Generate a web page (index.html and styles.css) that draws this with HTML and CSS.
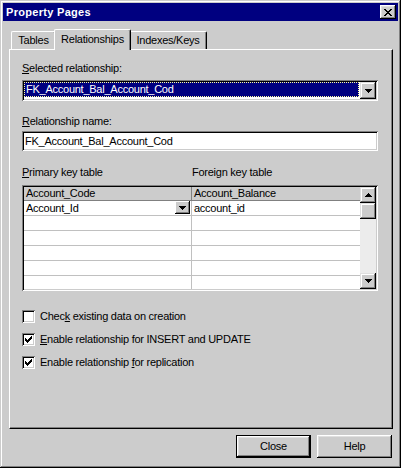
FILE: index.html
```html
<!DOCTYPE html>
<html>
<head>
<meta charset="utf-8">
<link rel="stylesheet" href="styles.css">
</head>
<body>
<div class="window">
  <div class="titlebar">
    <span class="title">Property Pages</span>
    <span class="close-btn"><svg width="8" height="7" viewBox="0 0 8 7"><path d="M0 0h2v1h1v1h2v-1h1v-1h2v1h-1v1h-1v1h-1v1h1v1h1v1h1v1h-2v-1h-1v-1h-2v1h-1v1h-2v-1h1v-1h1v-1h1v-1h-1v-1h-1v-1h-1z" fill="#000"/></svg></span>
  </div>
  <div class="tabs">
    <div class="tab tab-tables">Tables</div>
    <div class="tab tab-rel active">Relationships</div>
    <div class="tab tab-idx">Indexes/Keys</div>
  </div>
  <div class="panel">
    <div class="field-label first"><u>S</u>elected relationship:</div>
    <div class="combo">
      <div class="combo-value">FK_Account_Bal_Account_Cod</div>
      <div class="combo-btn"><svg width="7" height="4" viewBox="0 0 7 4"><path d="M0 0h7v1h-1v1h-1v1h-1v1h-1v-1h-1v-1h-1v-1h-1z" fill="#000"/></svg></div>
    </div>
    <div class="field-label second"><u>R</u>elationship name:</div>
    <div class="textbox">FK_Account_Bal_Account_Cod</div>
    <div class="grid-labels">
      <span class="gl-primary"><u>P</u>rimary key table</span>
      <span>Foreign key table</span>
    </div>
    <div class="grid">
      <div class="grid-table">
        <div class="grid-row grid-head">
          <div class="cell cell1">Account_Code</div>
          <div class="cell cell2">Account_Balance</div>
        </div>
        <div class="grid-row">
          <div class="cell cell1 cell-drop">
            <span>Account_Id</span>
            <span class="mini-btn"><svg width="7" height="4" viewBox="0 0 7 4"><path d="M0 0h7v1h-1v1h-1v1h-1v1h-1v-1h-1v-1h-1v-1h-1z" fill="#000"/></svg></span>
          </div>
          <div class="cell cell2">account_id</div>
        </div>
        <div class="grid-row"><div class="cell cell1"></div><div class="cell cell2"></div></div>
        <div class="grid-row"><div class="cell cell1"></div><div class="cell cell2"></div></div>
        <div class="grid-row"><div class="cell cell1"></div><div class="cell cell2"></div></div>
        <div class="grid-row"><div class="cell cell1"></div><div class="cell cell2"></div></div>
        <div class="grid-row"><div class="cell cell1"></div><div class="cell cell2"></div></div>
      </div>
      <div class="scrollbar">
        <div class="sb-btn"><svg width="7" height="4" viewBox="0 0 7 4"><path d="M3 0h1v1h1v1h1v1h1v1h-7v-1h1v-1h1v-1h1z" fill="#000"/></svg></div>
        <div class="sb-thumb"></div>
        <div class="sb-track"></div>
        <div class="sb-btn"><svg width="7" height="4" viewBox="0 0 7 4"><path d="M0 0h7v1h-1v1h-1v1h-1v1h-1v-1h-1v-1h-1v-1h-1z" fill="#000"/></svg></div>
      </div>
    </div>
    <div class="checks">
      <div class="check-row"><span class="box"></span><span>Chec<u>k</u> existing data on creation</span></div>
      <div class="check-row"><span class="box"><svg width="7" height="7" viewBox="0 0 7 7"><path d="M0 2h1v1h1v1h1v-1h1v-1h1v-1h1v-1h1v3h-1v1h-1v1h-1v1h-1v1h-1v-1h-1v-1h-1v-1h-1z" fill="#000"/></svg></span><span><u>E</u>nable relationship for INSERT and UPDATE</span></div>
      <div class="check-row"><span class="box"><svg width="7" height="7" viewBox="0 0 7 7"><path d="M0 2h1v1h1v1h1v-1h1v-1h1v-1h1v-1h1v3h-1v1h-1v1h-1v1h-1v1h-1v-1h-1v-1h-1v-1h-1z" fill="#000"/></svg></span><span>Enable relationship <u>f</u>or replication</span></div>
    </div>
  </div>
  <div class="buttons">
    <div class="btn default"><span>Close</span></div>
    <div class="btn">Help</div>
  </div>
</div>
</body>
</html>
```
FILE: styles.css
```css
* { box-sizing: border-box; }
html, body { margin: 0; padding: 0; }
body {
  width: 401px;
  height: 468px;
  overflow: hidden;
  background: #cccccc;
  font-family: "Liberation Sans", Arial, sans-serif;
  font-size: 11px;
  line-height: 13px;
  letter-spacing: -0.25px;
  color: #000;
}
svg { display: block; shape-rendering: crispEdges; }
u { text-decoration: underline; text-underline-offset: 1px; }

.window {
  width: 401px;
  height: 468px;
  padding: 3px;
  background: #cccccc;
  display: flex;
  flex-direction: column;
  box-shadow: inset -1px -1px #000, inset 1px 1px #cccccc, inset -2px -2px #808080, inset 2px 2px #fff;
}

.titlebar {
  height: 18px;
  flex-shrink: 0;
  background: #000080;
  color: #fff;
  display: flex;
  align-items: center;
  justify-content: space-between;
  padding: 0 2px 0 3px;
}
.title { font-weight: bold; font-size: 11px; letter-spacing: 0.3px; }
.close-btn {
  width: 16px;
  height: 14px;
  background: #cccccc;
  display: flex;
  align-items: center;
  justify-content: center;
  box-shadow: inset -1px -1px #000, inset 1px 1px #fff, inset -2px -2px #808080, inset 2px 2px #dfdfdf;
}

.tabs {
  display: flex;
  align-items: flex-end;
  height: 20px;
  margin: 8px 0 0 8px;
  flex-shrink: 0;
}
.tab {
  height: 18px;
  text-align: center;
  line-height: 16px;
  background: #cccccc;
  border-top: 1px solid #fff;
  border-left: 1px solid #fff;
  border-right: 1px solid #000;
  border-radius: 2px 2px 0 0;
  box-shadow: inset -1px 0 #808080;
}
.tab-tables { width: 45px; }
.tab-rel { width: 77px; }
.tab-idx { width: 78px; }
.tab.active {
  height: 21px;
  line-height: 18px;
  margin: 0 -2px -1px -2px;
  position: relative;
  z-index: 1;
}

.panel {
  margin-left: 6px;
  width: 384px;
  height: 380px;
  flex-shrink: 0;
  border-top: 1px solid #fff;
  border-left: 1px solid #fff;
  border-right: 1px solid #000;
  border-bottom: 1px solid #000;
  box-shadow: inset -1px -1px #808080;
  padding-left: 12px;
  display: flex;
  flex-direction: column;
}

.field-label { height: 13px; }
.field-label.first { margin-top: 12px; }
.field-label.second { margin-top: 14px; }

.combo {
  margin-top: 5px;
  width: 356px;
  height: 21px;
  padding: 2px;
  background: #fff;
  display: flex;
  box-shadow: inset 1px 1px #808080, inset -1px -1px #fff, inset 2px 2px #000, inset -2px -2px #cccccc;
}
.combo-value {
  flex: 1;
  margin: 0 1px 2px 0;
  background: #000080;
  color: #fff;
  border: 1px dotted #ffffa0;
  padding-left: 1px;
  line-height: 13px;
}
.combo-btn {
  width: 16px;
  height: 17px;
  background: #cccccc;
  display: flex;
  align-items: center;
  justify-content: center;
  box-shadow: inset -1px -1px #000, inset 1px 1px #dfdfdf, inset -2px -2px #808080, inset 2px 2px #fff;
}

.textbox {
  margin-top: 3px;
  width: 356px;
  height: 20px;
  padding: 0 3px;
  line-height: 20px;
  background: #fff;
  box-shadow: inset 1px 1px #808080, inset -1px -1px #fff, inset 2px 2px #000, inset -2px -2px #cccccc;
}

.grid-labels { display: flex; margin-top: 15px; height: 13px; }
.gl-primary { width: 170px; }

.grid {
  margin-top: 6px;
  width: 356px;
  height: 106px;
  padding: 2px;
  background: #fff;
  display: flex;
  box-shadow: inset 1px 1px #808080, inset -1px -1px #fff, inset 2px 2px #000, inset -2px -2px #cccccc;
}
.grid-table {
  flex: 1;
  display: flex;
  flex-direction: column;
  overflow: hidden;
}
.grid-row {
  display: flex;
  height: 15px;
  flex-shrink: 0;
  border-bottom: 1px solid #c0c0c0;
}
.grid-head {
  height: 14px;
  background: #cccccc;
  border-bottom: 1px solid #808080;
}
.cell { line-height: 14px; padding-left: 2px; }
.cell1 { width: 168px; border-right: 1px solid #c0c0c0; }
.grid-head .cell1 { border-right-color: #808080; }
.grid-head .cell { line-height: 13px; }
.cell2 { flex: 1; }
.cell-drop { display: flex; justify-content: space-between; align-items: flex-start; }
.mini-btn {
  width: 15px;
  height: 13px;
  margin-right: 1px;
  background: #cccccc;
  display: flex;
  align-items: center;
  justify-content: center;
  box-shadow: inset -1px -1px #000, inset 1px 1px #fff, inset -2px -2px #808080;
}

.scrollbar {
  width: 16px;
  display: flex;
  flex-direction: column;
  background: #ececec;
}
.sb-btn, .sb-thumb {
  height: 16px;
  flex-shrink: 0;
  background: #cccccc;
  display: flex;
  align-items: center;
  justify-content: center;
  box-shadow: inset -1px -1px #000, inset 1px 1px #dfdfdf, inset -2px -2px #808080, inset 2px 2px #fff;
}
.sb-track { flex: 1; }

.checks {
  margin-top: 14px;
  display: flex;
  flex-direction: column;
}
.check-row {
  height: 23px;
  display: flex;
  align-items: center;
  gap: 5px;
}
.box {
  width: 13px;
  height: 13px;
  padding: 3px;
  background: #fff;
  box-shadow: inset 1px 1px #808080, inset -1px -1px #fff, inset 2px 2px #000, inset -2px -2px #cccccc;
}

.buttons {
  display: flex;
  justify-content: flex-end;
  gap: 6px;
  margin: 6px 6px 0 0;
}
.btn {
  width: 75px;
  height: 23px;
  display: flex;
  align-items: center;
  justify-content: center;
  background: #cccccc;
  box-shadow: inset -1px -1px #000, inset 1px 1px #fff, inset -2px -2px #808080, inset 2px 2px #dfdfdf;
}
.btn.default {
  border: 1px solid #000;
  box-shadow: inset -1px -1px #000, inset 1px 1px #fff, inset -2px -2px #808080, inset 2px 2px #dfdfdf;
}
```
